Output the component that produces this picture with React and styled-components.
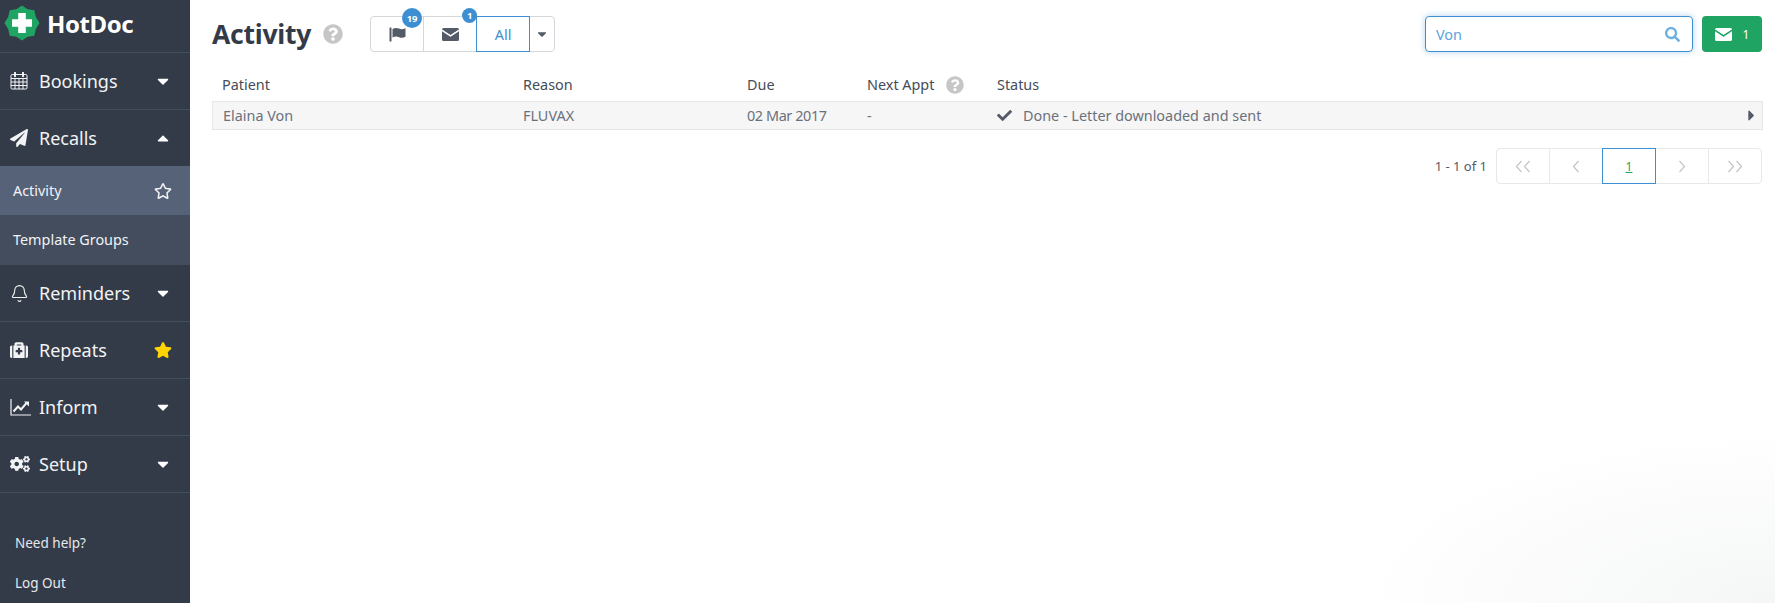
import React from 'react';
import styled, { createGlobalStyle } from 'styled-components';
import { FaPaperPlane, FaMedkit, FaCogs, FaRegStar, FaStar, FaSearch, FaCheck, FaQuestionCircle, FaCaretDown, FaCaretUp, FaCaretRight } from 'react-icons/fa';
import { Bell } from 'lucide-react';

const GlobalStyle = createGlobalStyle`
  html, body { margin: 0; height: 100%; overflow: hidden; }
  body { font-family: "Noto Sans", "Open Sans", sans-serif; color: #545b68; background: #fff; }
  * { box-sizing: border-box; }
`;

const Page = styled.div`
  display: flex;
  height: 603px;
`;

const Sidebar = styled.aside`
  width: 190px;
  flex: none;
  display: flex;
  flex-direction: column;
  background: #343b48;
  color: #fff;
`;

const Brand = styled.div`
  height: 53px;
  display: flex;
  align-items: center;
  gap: 7px;
  padding: 0 0 6px 4px;
  border-bottom: 1px solid #434e5e;
  font-size: 24px;
  font-weight: 700;
  letter-spacing: -0.4px;
`;

const NavRow = styled.div`
  height: ${p => p.$h || 57}px;
  display: flex;
  align-items: center;
  padding: 0 19px 0 11px;
  border-bottom: ${p => (p.$flat ? '0' : '1px solid #434e5e')};
  font-size: 18px;
  color: #f2f3f5;
`;

const NavIcon = styled.span`
  width: 29px;
  margin-left: -1px;
  display: flex;
`;

const NavLabel = styled.span`
  flex: 1;
`;

const Caret = styled.span`
  display: flex;
  font-size: 18px;
  color: #fff;
  margin-right: -1px;
`;

const SubRow = styled.div`
  height: ${p => (p.$active ? '49px' : '50px')};
  display: flex;
  align-items: center;
  justify-content: space-between;
  padding: ${p => (p.$active ? '0 18px 0 13px' : '0 18px 2px 13px')};
  font-size: 14.4px;
  color: #f2f3f5;
  background: ${p => (p.$active ? '#566278' : '#434d5e')};
`;

const FootLinks = styled.div`
  margin-top: auto;
  display: flex;
  flex-direction: column;
  gap: 19px;
  padding: 0 0 9px 15px;
  font-size: 13.5px;
  line-height: 21px;
  color: #e6e8eb;
`;

const Main = styled.main`
  flex: 1;
  min-width: 0;
  padding: 16px 12px 0 22px;
  background: radial-gradient(ellipse 420px 170px at 100% 100%, #f5f6f6, #fff);
`;

const Toolbar = styled.div`
  display: flex;
  align-items: center;
  height: 36px;
  margin-right: 1px;
`;

const Title = styled.h1`
  margin: 0 12px 0 0;
  font-size: 26.5px;
  font-weight: 700;
  color: #343b48;
  letter-spacing: -0.25px;
`;

const Help = styled.span`
  display: inline-flex;
  color: #c6c6c6;
  font-size: ${p => p.$size || 20}px;
`;

const Group = styled.div`
  display: flex;
  margin-left: 27px;
  height: 36px;
`;

const GroupBtn = styled.div`
  position: relative;
  width: ${p => p.$w || 54}px;
  margin-left: -1px;
  display: flex;
  align-items: center;
  justify-content: center;
  font-size: 14.4px;
  color: ${p => (p.$active ? '#3d8fd1' : '#545b68')};
  border: 1px solid ${p => (p.$active ? '#3d8fd1' : '#d5d7da')};
  z-index: ${p => (p.$active ? 1 : 0)};
  background: #fff;
  &:first-child { border-radius: 4px 0 0 4px; margin-left: 0; }
  &:last-child { border-radius: 0 4px 4px 0; }
`;

const Badge = styled.span`
  position: absolute;
  top: -9px;
  right: ${p => p.$right}px;
  min-width: ${p => p.$size}px;
  height: ${p => p.$size}px;
  border-radius: 50%;
  display: flex;
  align-items: center;
  justify-content: center;
  background: #3d8fd1;
  color: #fff;
  font-size: 9.5px;
  font-weight: 700;
  z-index: 2;
`;

const SearchBox = styled.div`
  margin-left: auto;
  width: 268px;
  height: 36px;
  display: flex;
  align-items: center;
  justify-content: space-between;
  padding: 0 12px 0 10px;
  border: 1px solid #3d8fd1;
  border-radius: 4px;
  box-shadow: 0 0 6px rgba(61, 143, 209, 0.4);
  color: #5ba3dc;
  font-size: 14.4px;
  svg { color: #6cb0e2; }
`;

const SendBtn = styled.div`
  margin-left: 9px;
  width: 60px;
  height: 36px;
  display: flex;
  align-items: center;
  justify-content: center;
  gap: 11px;
  background: #1fa463;
  border-radius: 4px;
  color: #fff;
  font-size: 12px;
`;

const cols = '301px 224px 120px 130px 1fr';

const HeadRow = styled.div`
  display: grid;
  grid-template-columns: ${cols};
  margin-top: 16px;
  height: 33px;
  align-items: center;
  font-size: 14.4px;
  color: #454c59;
`;

const HeadCell = styled.div`
  display: flex;
  align-items: center;
  gap: 12px;
  padding-left: 10px;
`;

const DataRow = styled.div`
  position: relative;
  display: grid;
  grid-template-columns: ${cols};
  height: 29px;
  align-items: center;
  background: #f6f6f6;
  border: 1px solid #e6e6e6;
  font-size: 14.4px;
  color: #6b717c;
`;

const DataCell = styled.div`
  display: flex;
  align-items: center;
  gap: 11px;
  padding-left: ${p => (p.$first ? 10 : 9)}px;
  letter-spacing: ${p => (p.$tight ? '-0.4px' : '0')};
  svg { color: #545b68; font-size: 15px; }
`;

const RowArrow = styled.span`
  position: absolute;
  right: 2px;
  top: 5px;
  display: flex;
  font-size: 17px;
  color: #545b68;
`;

const Pager = styled.div`
  display: flex;
  align-items: center;
  justify-content: flex-end;
  margin: 18px 1px 0 0;
  font-size: 13px;
  color: #545b68;
`;

const PagerInfo = styled.span`
  margin-right: 10px;
`;

const PageBtn = styled.div`
  width: 54px;
  height: 36px;
  margin-left: -1px;
  display: flex;
  align-items: center;
  justify-content: center;
  border: 1px solid ${p => (p.$active ? '#3d8fd1' : '#e8e8e8')};
  color: ${p => (p.$active ? '#1fa463' : '#c4c4c4')};
  text-decoration: ${p => (p.$active ? 'underline' : 'none')};
  font-size: 12px;
  z-index: ${p => (p.$active ? 1 : 0)};
  &:first-of-type { border-radius: 4px 0 0 4px; }
  &:last-of-type { border-radius: 0 4px 4px 0; }
`;

const Logo = () => (
  <svg width="36" height="36" viewBox="0 0 38 38">
    <polygon
      fill="#1fa463"
      points="19,0.5 25,4.5 32,5.5 33.5,12.5 37.5,19 33.5,25.5 32,32.5 25,33.5 19,37.5 13,33.5 6,32.5 4.5,25.5 0.5,19 4.5,12.5 6,5.5 13,4.5"
    />
    <path fill="#fff" d="M15 8.5h8V15h6.5v8H23v6.5h-8V23H8.5v-8H15z" />
  </svg>
);

const CalendarIcon = () => (
  <svg width="18" height="18" viewBox="0 0 18 18" fill="none" stroke="currentColor" strokeWidth="1">
    <rect x="1" y="2.5" width="16" height="14.5" rx="1.2" />
    <path d="M1 6.5h16M1 10h16M1 13.5h16M5 6.5V17M9 6.5V17M13 6.5V17" />
    <path d="M5 .8v3.4M13 .8v3.4" strokeWidth="2" strokeLinecap="round" />
  </svg>
);

const ChartIcon = () => (
  <svg width="21" height="18" viewBox="0 0 21 18" fill="none" stroke="currentColor">
    <path d="M1 1v16h20" strokeWidth="1.2" />
    <path d="M3.5 13.5 8 8.5l3 3L16.5 5" strokeWidth="2" />
    <path d="M14 3.5h5v5z" fill="currentColor" stroke="none" />
  </svg>
);

const FlagIcon = () => (
  <svg width="17" height="15" viewBox="0 0 17 15" fill="currentColor">
    <rect x="0.5" y="0.5" width="2" height="14" rx="0.6" />
    <path d="M3.5 2C6 .6 8 .8 10 1.6s4 .8 6.5-.4v8.6c-2.5 1.3-4.5 1.2-6.5.4s-4-1-6.5.4z" />
  </svg>
);

const EnvelopeIcon = ({ line }) => (
  <svg width="17" height="13" viewBox="0 0 17 13" fill="currentColor">
    <path d="M1.5 0h14A1.5 1.5 0 0 1 17 1.5L8.5 7 0 1.5A1.5 1.5 0 0 1 1.5 0z" />
    <path d="M0 3.2 8.5 8.7 17 3.2v8.3a1.5 1.5 0 0 1-1.5 1.5h-14A1.5 1.5 0 0 1 0 11.5z" />
    {line && <path d="M0 2.2 8.5 7.8 17 2.2" fill="none" stroke={line} strokeWidth="1" />}
  </svg>
);

const Chevrons = ({ dir, double }) => (
  <svg width={double ? 16 : 8} height="13" viewBox={double ? '0 0 16 13' : '0 0 8 13'} fill="none" stroke="currentColor" strokeWidth="1.2">
    {dir === 'left' ? (
      <>
        <path d="M6.5 1 1.5 6.5l5 5.5" />
        {double && <path d="M14.5 1 9.5 6.5l5 5.5" />}
      </>
    ) : (
      <>
        <path d="M1.5 1l5 5.5-5 5.5" />
        {double && <path d="M9.5 1l5 5.5-5 5.5" />}
      </>
    )}
  </svg>
);

const navTop = [
  { icon: <CalendarIcon />, label: 'Bookings', end: <FaCaretDown /> },
  { icon: <FaPaperPlane size={18} />, label: 'Recalls', end: <FaCaretUp />, flat: true, h: 56 },
];

const navBottom = [
  { icon: <Bell size={19} strokeWidth={1.4} />, label: 'Reminders', end: <FaCaretDown /> },
  { icon: <FaMedkit size={18} />, label: 'Repeats', end: <FaStar color="#ffd400" /> },
  { icon: <ChartIcon />, label: 'Inform', end: <FaCaretDown /> },
  { icon: <FaCogs size={20} />, label: 'Setup', end: <FaCaretDown /> },
];

const renderNav = item => (
  <NavRow key={item.label} $flat={item.flat} $h={item.h}>
    <NavIcon>{item.icon}</NavIcon>
    <NavLabel>{item.label}</NavLabel>
    <Caret>{item.end}</Caret>
  </NavRow>
);

export default function App() {
  return (
    <Page>
      <GlobalStyle />
      <Sidebar>
        <Brand><Logo />HotDoc</Brand>
        {navTop.map(renderNav)}
        <SubRow $active>Activity <FaRegStar size={18} /></SubRow>
        <SubRow>Template Groups</SubRow>
        {navBottom.map(renderNav)}
        <FootLinks>
          <span>Need help?</span>
          <span>Log Out</span>
        </FootLinks>
      </Sidebar>
      <Main>
        <Toolbar>
          <Title>Activity</Title>
          <Help><FaQuestionCircle /></Help>
          <Group>
            <GroupBtn><Badge $right={1} $size={20}>19</Badge><FlagIcon /></GroupBtn>
            <GroupBtn><Badge $right={-1} $size={15}>1</Badge><EnvelopeIcon line="#fff" /></GroupBtn>
            <GroupBtn $active>All</GroupBtn>
            <GroupBtn $w={26}><FaCaretDown size={14} /></GroupBtn>
          </Group>
          <SearchBox>Von <FaSearch size={15} /></SearchBox>
          <SendBtn><EnvelopeIcon line="#1fa463" />1</SendBtn>
        </Toolbar>
        <HeadRow>
          <HeadCell>Patient</HeadCell>
          <HeadCell>Reason</HeadCell>
          <HeadCell>Due</HeadCell>
          <HeadCell>Next Appt <Help $size={18}><FaQuestionCircle /></Help></HeadCell>
          <HeadCell>Status</HeadCell>
        </HeadRow>
        <DataRow>
          <DataCell $first>Elaina Von</DataCell>
          <DataCell>FLUVAX</DataCell>
          <DataCell $tight>02 Mar 2017</DataCell>
          <DataCell>-</DataCell>
          <DataCell><FaCheck />Done - Letter downloaded and sent</DataCell>
          <RowArrow><FaCaretRight /></RowArrow>
        </DataRow>
        <Pager>
          <PagerInfo>1 - 1 of 1</PagerInfo>
          <PageBtn><Chevrons dir="left" double /></PageBtn>
          <PageBtn><Chevrons dir="left" /></PageBtn>
          <PageBtn $active>1</PageBtn>
          <PageBtn><Chevrons dir="right" /></PageBtn>
          <PageBtn><Chevrons dir="right" double /></PageBtn>
        </Pager>
      </Main>
    </Page>
  );
}
